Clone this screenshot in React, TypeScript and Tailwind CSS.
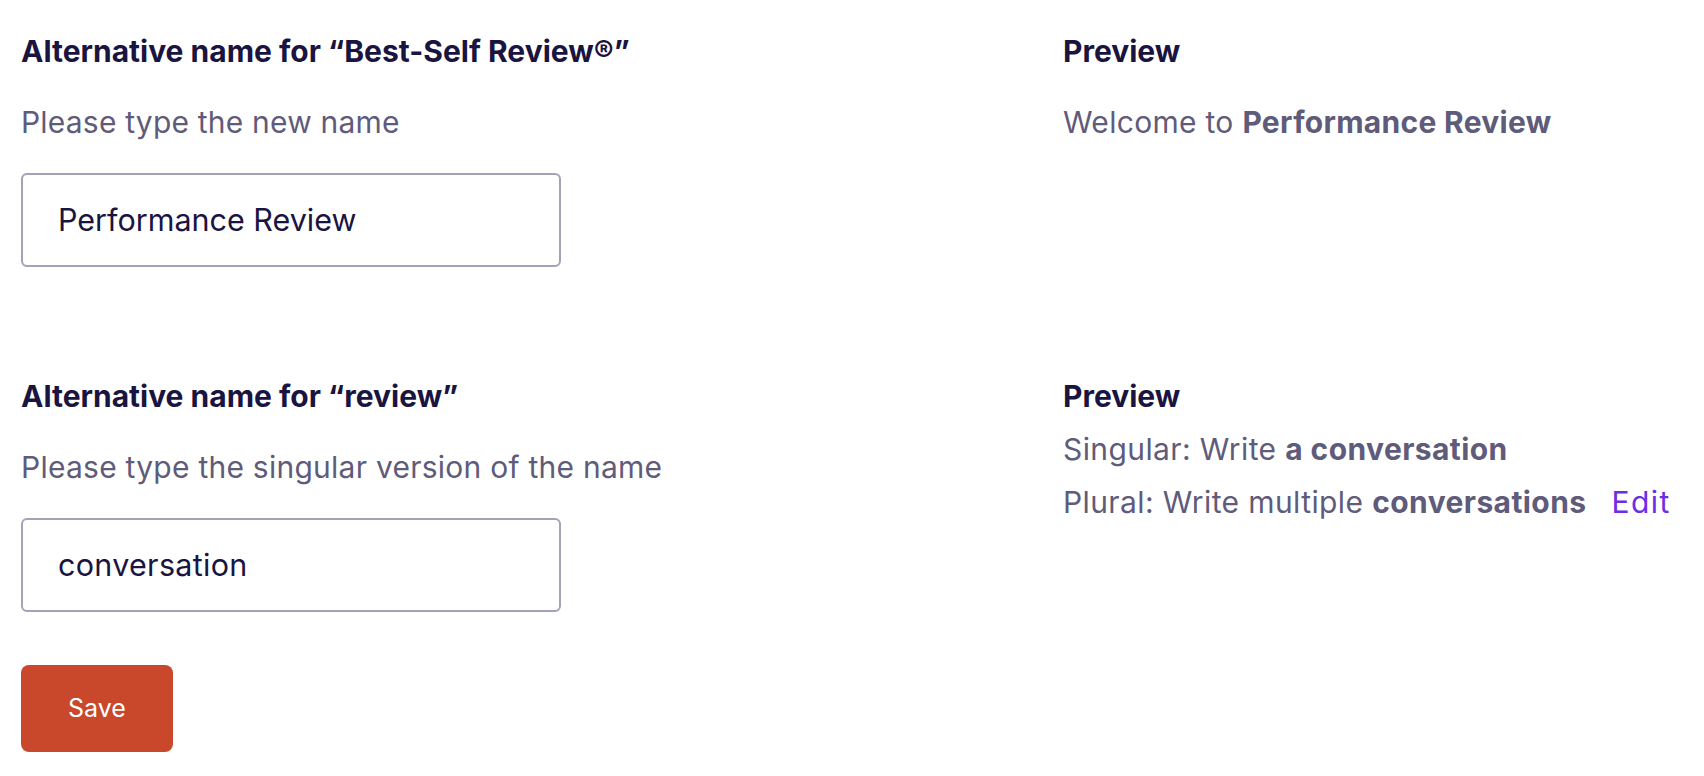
import React from "react";

export default function App() {
  return (
    <div className="min-h-[776px] w-[1704px] bg-white pl-[21px] pt-[33px] font-['Inter',sans-serif]">
      <div className="flex">
        <div className="flex w-[1042px] flex-col">
          <div className="text-[30px] font-bold leading-[36px] text-[#1a1440]">Alternative name for “Best-Self Review®”</div>
          <div className="mt-[35px] text-[30px] leading-[36px] tracking-[0.2px] text-[#5f5b7a]">Please type the new name</div>
          <div className="mt-[33px] flex h-[94px] w-[540px] items-center rounded-[6px] border-2 border-[#a5a2b8] pl-[35px] text-[30.5px] text-[#1a1440]">
            Performance Review
          </div>
        </div>
        <div className="flex flex-col">
          <div className="text-[30px] font-bold leading-[36px] text-[#1a1440]">Preview</div>
          <div className="mt-[35px] text-[30px] leading-[36px] tracking-[0.3px] text-[#5f5b7a]">
            Welcome to <span className="font-bold">Performance Review</span>
          </div>
        </div>
      </div>
      <div className="mt-[111px] flex">
        <div className="flex w-[1042px] flex-col">
          <div className="text-[30px] font-bold leading-[36px] text-[#1a1440]">Alternative name for “review”</div>
          <div className="mt-[35px] text-[30px] leading-[36px] tracking-[0.25px] text-[#5f5b7a]">Please type the singular version of the name</div>
          <div className="mt-[33px] flex h-[94px] w-[540px] items-center rounded-[6px] border-2 border-[#a5a2b8] pl-[35px] text-[30.5px] tracking-[0.3px] text-[#1a1440]">
            conversation
          </div>
        </div>
        <div className="flex flex-col gap-[17px]">
          <div className="text-[30px] font-bold leading-[36px] text-[#1a1440]">Preview</div>
          <div className="text-[30px] leading-[36px] tracking-[0.4px] text-[#5f5b7a]">
            Singular: Write <span className="font-bold">a conversation</span>
          </div>
          <div className="flex gap-[25px] text-[30px] leading-[36px]">
            <span className="tracking-[0.4px] text-[#5f5b7a]">
              Plural: Write multiple <span className="font-bold">conversations</span>
            </span>
            <span className="tracking-[1.5px] text-[#6b2ee6]">Edit</span>
          </div>
        </div>
      </div>
      <button className="mt-[53px] h-[87px] w-[152px] rounded-[8px] bg-[#c9472a] text-[25px] text-white">Save</button>
    </div>
  );
}
